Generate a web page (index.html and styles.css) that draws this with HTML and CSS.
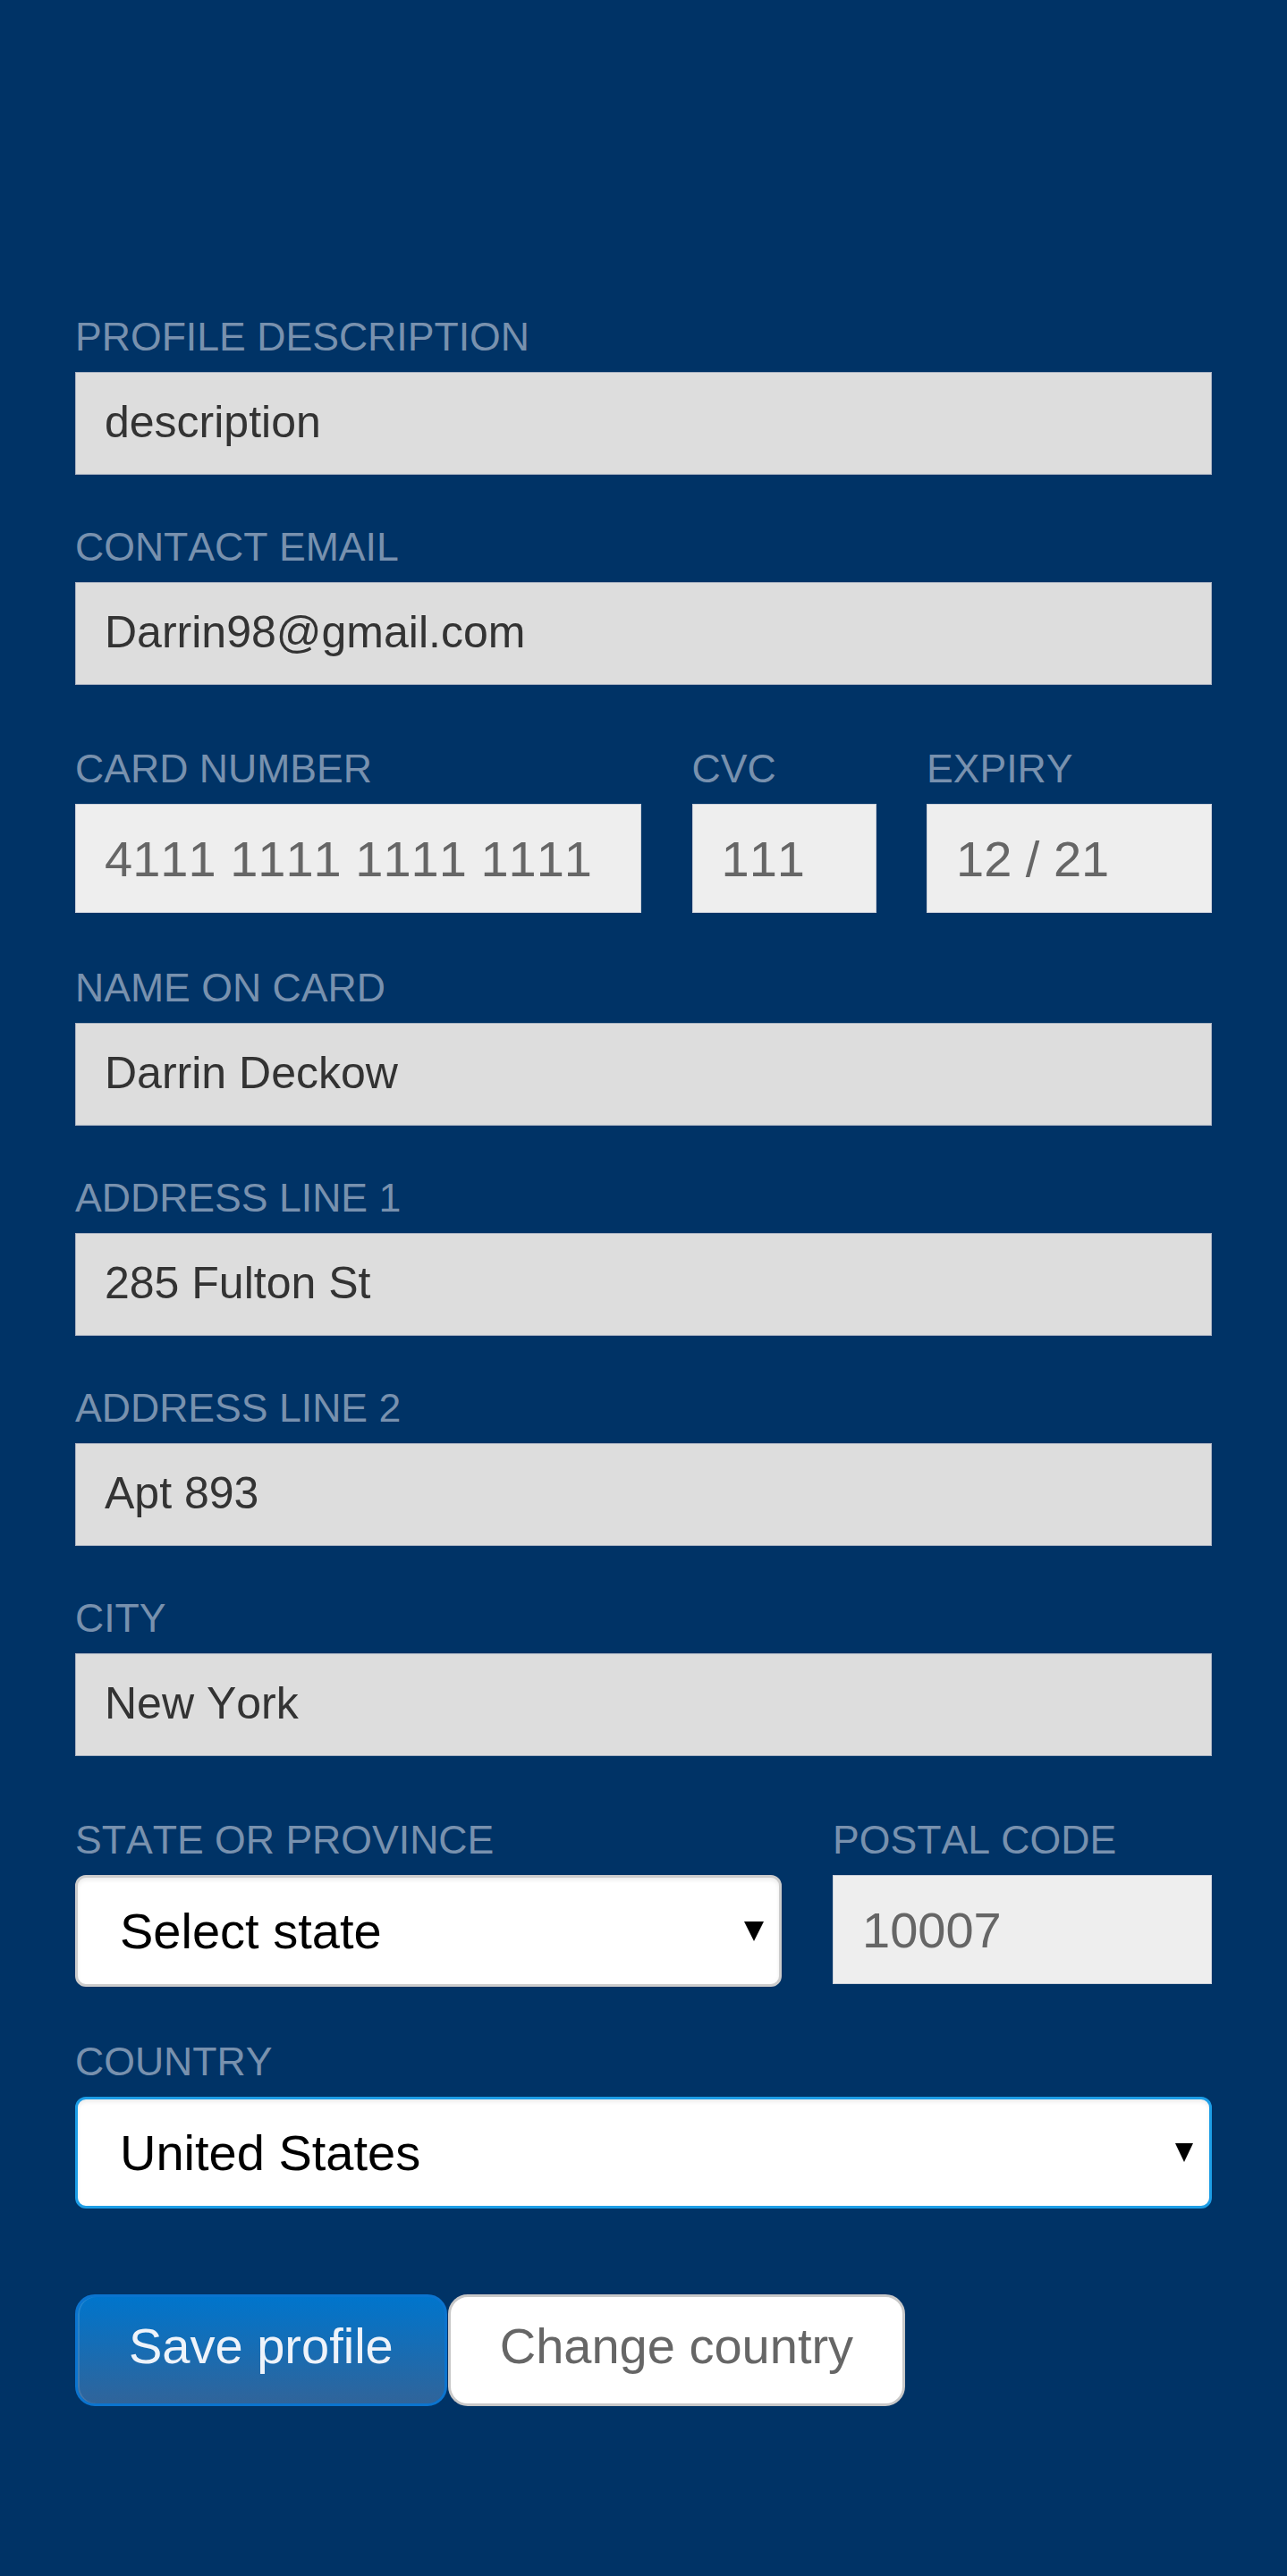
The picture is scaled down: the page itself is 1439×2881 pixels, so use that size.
FILE: index.html
```html
<!DOCTYPE html>
<html lang="en">
<head>
<meta charset="utf-8">
<title>Profile</title>
<link rel="stylesheet" href="styles.css">
</head>
<body>
<div class="page">
  <form class="profile-form">
    <div class="field">
      <label class="label" for="desc">PROFILE DESCRIPTION</label>
      <input class="input" id="desc" type="text" value="description">
    </div>
    <div class="field">
      <label class="label" for="email">CONTACT EMAIL</label>
      <input class="input" id="email" type="text" value="Darrin98@gmail.com">
    </div>
    <div class="row row-card">
      <div class="field">
        <label class="label" for="card">CARD NUMBER</label>
        <input class="input input-card" id="card" type="text" value="4111 1111 1111 1111">
      </div>
      <div class="field">
        <label class="label" for="cvc">CVC</label>
        <input class="input input-card" id="cvc" type="text" value="111">
      </div>
      <div class="field">
        <label class="label" for="exp">EXPIRY</label>
        <input class="input input-card" id="exp" type="text" value="12 / 21">
      </div>
    </div>
    <div class="field">
      <label class="label" for="name">NAME ON CARD</label>
      <input class="input" id="name" type="text" value="Darrin Deckow">
    </div>
    <div class="field">
      <label class="label" for="addr1">ADDRESS LINE 1</label>
      <input class="input" id="addr1" type="text" value="285 Fulton St">
    </div>
    <div class="field">
      <label class="label" for="addr2">ADDRESS LINE 2</label>
      <input class="input" id="addr2" type="text" value="Apt 893">
    </div>
    <div class="field">
      <label class="label" for="city">CITY</label>
      <input class="input" id="city" type="text" value="New York">
    </div>
    <div class="row row-state">
      <div class="field">
        <label class="label" for="state">STATE OR PROVINCE</label>
        <div class="select-wrap">
          <select class="select" id="state">
            <option selected>Select state</option>
            <option>New York</option>
          </select>
        </div>
      </div>
      <div class="field">
        <label class="label" for="zip">POSTAL CODE</label>
        <input class="input input-card" id="zip" type="text" value="10007">
      </div>
    </div>
    <div class="field">
      <label class="label" for="country">COUNTRY</label>
      <div class="select-wrap select-wrap-focus">
        <select class="select select-focus" id="country">
          <option selected>United States</option>
          <option>Canada</option>
        </select>
      </div>
    </div>
    <div class="actions">
      <button type="button" class="btn btn-primary">Save profile</button>
      <button type="button" class="btn btn-secondary">Change country</button>
    </div>
  </form>
</div>
</body>
</html>
```

FILE: styles.css
```css
html, body {
  margin: 0;
  padding: 0;
  background: #003366;
}

body {
  font-family: "Liberation Sans", Arial, Helvetica, sans-serif;
  font-kerning: none;
  min-height: 2881px;
}

.page {
  padding: 352px 84px 0;
}

.profile-form {
  display: block;
}

.profile-form > * + * {
  margin-top: 56px;
}

.profile-form > .row {
  margin-top: 69px;
}

.profile-form > .row + .field {
  margin-top: 59px;
}

.profile-form > .actions {
  margin-top: 96px;
}

.field {
  min-width: 0;
}

.label {
  display: block;
  font-size: 44.6px;
  line-height: 50px;
  margin-bottom: 14px;
  color: #7891ae;
  white-space: nowrap;
  font-kerning: none;
}

.input {
  display: block;
  box-sizing: border-box;
  width: 100%;
  height: 115px;
  margin: 0;
  padding: 0 32px 4px;
  border: 1px solid #a9b3c2;
  border-radius: 0;
  background: #dddddd;
  color: #333333;
  font-family: inherit;
  font-size: 50px;
  font-kerning: none;
  outline: none;
}

.input-card {
  height: 122px;
  padding-bottom: 0;
  border-color: #c9d0da;
  background: #eeeeee;
  color: #666666;
  font-size: 56px;
}

.row {
  display: grid;
}

.row-card {
  grid-template-columns: 633fr 206fr 319fr;
  column-gap: 56.5px;
}

.row-state {
  grid-template-columns: 790fr 424fr;
  column-gap: 57px;
  align-items: start;
}

.select-wrap {
  position: relative;
}

.select-wrap::after {
  content: "";
  position: absolute;
  right: 20px;
  top: 50%;
  margin-top: -11px;
  width: 0;
  height: 0;
  border-left: 11px solid transparent;
  border-right: 11px solid transparent;
  border-top: 22px solid #000000;
  pointer-events: none;
}

.select-wrap-focus::after {
  right: 21px;
  border-left-width: 10px;
  border-right-width: 10px;
  border-top-width: 21px;
}

.select {
  display: block;
  box-sizing: border-box;
  width: 100%;
  height: 125px;
  margin: 0;
  padding: 0 70px 0 47px;
  -webkit-appearance: none;
  appearance: none;
  background: #ffffff;
  border: 3px solid #cccccc;
  border-radius: 12px;
  box-shadow: inset 0 3px 4px rgba(0, 0, 0, 0.07);
  color: #000000;
  font-family: inherit;
  font-size: 56px;
  font-kerning: none;
  outline: none;
}

.select-focus {
  border-color: #1c9de6;
}

.actions {
  display: flex;
  gap: 1px;
}

.btn {
  box-sizing: border-box;
  height: 125px;
  margin: 0;
  padding: 0 57px 10px;
  border-radius: 22px;
  font-family: inherit;
  font-size: 56px;
  font-kerning: none;
  cursor: pointer;
}

.btn-primary {
  border: 3px solid #0b74cf;
  background: linear-gradient(to bottom, #0075cc, #30649a);
  color: #eef3fa;
  box-shadow: inset 2px 0 0 rgba(255, 255, 255, 0.12);
}

.btn-secondary {
  padding-left: 55px;
  padding-right: 55px;
  border: 3px solid #c8c8c8;
  background: #ffffff;
  color: #666666;
}
```
